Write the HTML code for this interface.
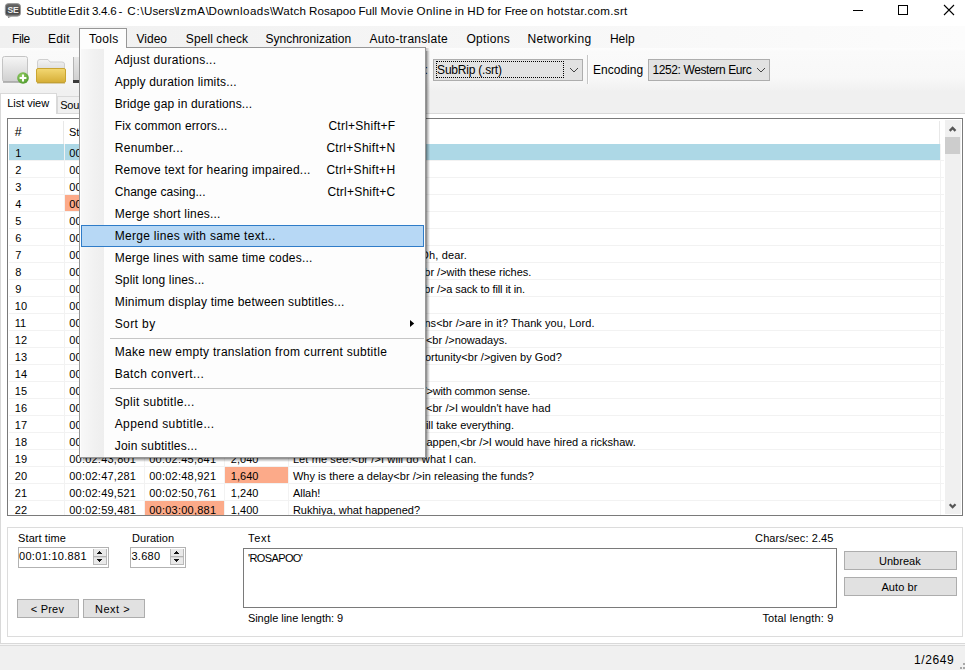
<!DOCTYPE html>
<html><head><meta charset="utf-8"><title>Subtitle Edit</title>
<style>
*{box-sizing:border-box;margin:0;padding:0}
html,body{width:965px;height:670px;overflow:hidden}
body{position:relative;background:#f0f0f0;font-family:"Liberation Sans",sans-serif;font-size:11px;color:#000;}
.a{position:absolute;white-space:nowrap}
.t{position:absolute;white-space:pre;line-height:14px;height:14px;font-size:11px}
.t12{position:absolute;white-space:pre;line-height:14px;height:14px;font-size:12px}
#title{left:0;top:0;width:965px;height:26px;background:#fff}
#menubar{left:0;top:26px;width:965px;height:22px;background:linear-gradient(to right,#f0f0f0,#fcfcfc)}
#toolbar{left:0;top:48px;width:965px;height:44px;background:linear-gradient(#fdfdfd 0%,#fafafa 8%,#f8f8f8 66%,#f0f0f0 100%)}
.btn{position:absolute;background:#e1e1e1;border:1px solid #adadad}
</style></head>
<body>
<div id="title" class="a"></div>
<svg class="a" style="left:4px;top:2px" width="18" height="17" viewBox="0 0 18 17">
<defs><linearGradient id="gi" x1="0" y1="0" x2="0" y2="1"><stop offset="0" stop-color="#6a6a6a"/><stop offset="0.75" stop-color="#444"/><stop offset="1" stop-color="#7a7a7a"/></linearGradient></defs>
<path d="M4 14.5 L4 16 L8 14.5 Z" fill="#777"/>
<rect x="1.3" y="1.6" width="15.2" height="12.6" rx="3.2" fill="url(#gi)" stroke="#9a9a9a" stroke-width="0.9"/>
<text x="8.9" y="11.1" font-family="Liberation Sans" font-size="8.6" font-weight="bold" fill="#ececec" text-anchor="middle" letter-spacing="-0.3">SE</text>
</svg>
<div class="t" style="left:26.2px;top:4px;font-size:11.6px;letter-spacing:0.229px;">Subtitle</div>
<div class="t" style="left:68.0px;top:4px;font-size:11.6px;letter-spacing:0.379px;">Edit</div>
<div class="t" style="left:91.9px;top:4px;font-size:11.6px;letter-spacing:-0.259px;">3.4.6</div>
<div class="t" style="left:118.6px;top:4px;font-size:11.6px;letter-spacing:1.625px;">-</div>
<div class="t" style="left:127.3px;top:4px;font-size:11.6px;letter-spacing:0.857px;">C:\</div>
<div class="t" style="left:144.0px;top:4px;font-size:11.6px;letter-spacing:0.050px;">Users\</div>
<div class="t" style="left:176.5px;top:4px;font-size:11.6px;letter-spacing:0.712px;">IzmA\</div>
<div class="t" style="left:208.4px;top:4px;font-size:11.6px;letter-spacing:0.471px;">Downloads\</div>
<div class="t" style="left:272.6px;top:4px;font-size:11.6px;letter-spacing:0.233px;">Watch</div>
<div class="t" style="left:309.1px;top:4px;font-size:11.6px;letter-spacing:0.025px;">Rosapoo</div>
<div class="t" style="left:358.4px;top:4px;font-size:11.6px;letter-spacing:0.028px;">Full</div>
<div class="t" style="left:380.4px;top:4px;font-size:11.6px;letter-spacing:0.513px;">Movie</div>
<div class="t" style="left:416.6px;top:4px;font-size:11.6px;letter-spacing:0.364px;">Online</div>
<div class="t" style="left:454.8px;top:4px;font-size:11.6px;letter-spacing:0.134px;">in</div>
<div class="t" style="left:467.2px;top:4px;font-size:11.6px;letter-spacing:0.525px;">HD</div>
<div class="t" style="left:487.4px;top:4px;font-size:11.6px;letter-spacing:0.090px;">for</div>
<div class="t" style="left:504.7px;top:4px;font-size:11.6px;letter-spacing:-0.311px;">Free</div>
<div class="t" style="left:529.9px;top:4px;font-size:11.6px;letter-spacing:0.647px;">on</div>
<div class="t" style="left:547.1px;top:4px;font-size:11.6px;letter-spacing:0.298px;">hotstar.com.srt</div>
<div class="a" style="left:853px;top:10px;width:10px;height:1px;background:#000"></div>
<div class="a" style="left:898px;top:5px;width:10px;height:10px;border:1px solid #000"></div>
<svg class="a" style="left:943px;top:4px" width="12" height="12" viewBox="0 0 12 12"><path d="M1 1 L11 11 M11 1 L1 11" stroke="#000" stroke-width="1.1" fill="none"/></svg>
<div id="menubar" class="a"></div>
<div class="t12" style="left:12.1px;top:32px;letter-spacing:-0.386px;">File</div>
<div class="t12" style="left:47.9px;top:32px;letter-spacing:0.378px;">Edit</div>
<div class="t12" style="left:136.4px;top:32px;letter-spacing:0.043px;">Video</div>
<div class="t12" style="left:185.8px;top:32px;letter-spacing:0.084px;">Spell check</div>
<div class="t12" style="left:265.4px;top:32px;letter-spacing:0.021px;">Synchronization</div>
<div class="t12" style="left:369.4px;top:32px;letter-spacing:0.284px;">Auto-translate</div>
<div class="t12" style="left:466.4px;top:32px;letter-spacing:0.334px;">Options</div>
<div class="t12" style="left:527.4px;top:32px;letter-spacing:0.417px;">Networking</div>
<div class="t12" style="left:609.9px;top:32px;">Help</div>
<div id="toolbar" class="a"></div>
<svg class="a" style="left:1px;top:55px" width="30" height="30" viewBox="0 0 30 30">
<defs><linearGradient id="g1" x1="0" y1="0" x2="0" y2="1"><stop offset="0" stop-color="#f6f6f6"/><stop offset="1" stop-color="#d0d0d0"/></linearGradient>
<radialGradient id="g2" cx="0.4" cy="0.35" r="0.7"><stop offset="0" stop-color="#9ad06a"/><stop offset="1" stop-color="#4e9a2c"/></radialGradient></defs>
<rect x="1.5" y="1.5" width="25" height="25" rx="2" fill="url(#g1)" stroke="#c4c4c4"/>
<rect x="2" y="26.2" width="24" height="1.6" fill="#a8a8a8"/>
<circle cx="22" cy="23" r="5.8" fill="url(#g2)"/>
<path d="M22 19.6 V26.4 M18.6 23 H25.4" stroke="#fff" stroke-width="2"/>
</svg>
<svg class="a" style="left:35px;top:56px" width="33" height="29" viewBox="0 0 33 29">
<defs><linearGradient id="g3" x1="0" y1="0" x2="0" y2="1"><stop offset="0" stop-color="#f3d873"/><stop offset="1" stop-color="#d6ae36"/></linearGradient>
<linearGradient id="g4" x1="0" y1="0" x2="0" y2="1"><stop offset="0" stop-color="#f4f4f4"/><stop offset="1" stop-color="#dcdcdc"/></linearGradient></defs>
<path d="M2.5 6 Q2.5 3.5 5 3.5 H13 L15 6 H27 Q29.5 6 29.5 8 V14 H2.5 Z" fill="url(#g4)" stroke="#cfcfcf"/>
<rect x="1.5" y="12.5" width="29" height="14" rx="1.5" fill="url(#g3)" stroke="#caa531"/>
<rect x="2" y="26.5" width="28" height="1.2" fill="#b79a3a" opacity="0.6"/>
</svg>
<div class="a" style="left:73px;top:57px;width:7px;height:24px;background:linear-gradient(#e8e8e8,#cfcfcf);border-left:1px solid #b4b4b4"></div>
<div class="a" style="left:73px;top:80px;width:7px;height:3px;background:#3a3a3a"></div>
<div class="t12" style="left:424.5px;top:63px">:</div>
<div class="a" style="left:433px;top:59px;width:150px;height:22px;background:#e2e2e2;border:1px solid #adadad"></div>
<div class="a" style="left:436px;top:61px;width:128px;height:17px;border:1px dotted #000"></div>
<div class="t12" style="left:437.1px;top:63px;letter-spacing:-0.212px;">SubRip (.srt)</div>
<svg class="a" style="left:569px;top:67px" width="10" height="7" viewBox="0 0 10 7"><path d="M1 1 L5 5 L9 1" stroke="#444" stroke-width="1" fill="none"/></svg>
<div class="a" style="left:587px;top:55px;width:1px;height:29px;background:#c5c5c5"></div>
<div class="a" style="left:588px;top:55px;width:1px;height:29px;background:#fdfdfd"></div>
<div class="t12" style="left:593.1px;top:63px;letter-spacing:-0.006px;">Encoding</div>
<div class="a" style="left:648px;top:59px;width:122px;height:22px;background:#e2e2e2;border:1px solid #adadad"></div>
<div class="t12" style="left:652.4px;top:63px;letter-spacing:-0.386px;">1252: Western Eurc</div>
<svg class="a" style="left:756px;top:67px" width="10" height="7" viewBox="0 0 10 7"><path d="M1 1 L5 5 L9 1" stroke="#444" stroke-width="1" fill="none"/></svg>
<div class="a" style="left:0;top:113px;width:965px;height:531px;background:#fff;border:1px solid #d9d9d9;border-right:none"></div>
<div class="a" style="left:57px;top:96px;width:40px;height:17px;background:#f0f0f0;border:1px solid #d9d9d9;border-bottom:none"></div>
<div class="t" style="left:60.2px;top:98px;letter-spacing:-0.226px;">Sou</div>
<div class="a" style="left:0px;top:93px;width:57px;height:21px;background:#fff;border:1px solid #d9d9d9;border-bottom:none"></div>
<div class="t" style="left:7.2px;top:96px;letter-spacing:-0.032px;">List view</div>
<div class="a" style="left:7px;top:118px;width:956px;height:398px;background:#fff;border:1px solid #7a7a7a"></div>
<div class="a" style="left:8px;top:119px;width:937px;height:396px;overflow:hidden">
<div class="t" style="left:6.7px;top:5.5px;font-size:12.5px;">#</div>
<div class="t" style="left:61.0px;top:6px;">Start time</div>
<div class="a" style="left:55px;top:2px;width:1px;height:23px;background:#e8e8e8"></div>
<div class="a" style="left:56px;top:25px;width:1px;height:371px;background:#f2f2f2"></div>
<div class="a" style="left:135px;top:2px;width:1px;height:23px;background:#e8e8e8"></div>
<div class="a" style="left:136px;top:25px;width:1px;height:371px;background:#f2f2f2"></div>
<div class="a" style="left:215px;top:2px;width:1px;height:23px;background:#e8e8e8"></div>
<div class="a" style="left:216px;top:25px;width:1px;height:371px;background:#f2f2f2"></div>
<div class="a" style="left:279px;top:2px;width:1px;height:23px;background:#e8e8e8"></div>
<div class="a" style="left:280px;top:25px;width:1px;height:371px;background:#f2f2f2"></div>
<div class="a" style="left:931px;top:2px;width:1px;height:23px;background:#e8e8e8"></div>
<div class="a" style="left:932px;top:25px;width:1px;height:371px;background:#f2f2f2"></div>
<div class="a" style="left:1px;top:25px;width:55px;height:16px;background:#add8e6"></div>
<div class="a" style="left:57px;top:25px;width:875px;height:16px;background:#add8e6"></div>
<div class="a" style="left:1px;top:41px;width:935px;height:1px;background:#f2f2f2"></div>
<div class="t" style="left:7.3px;top:27px;">1</div>
<div class="t" style="left:61.2px;top:27px;letter-spacing:0.230px;">00:01:10,881</div>
<div class="t" style="left:141.2px;top:27px;letter-spacing:0.239px;">00:01:14,561</div>
<div class="t" style="left:222.8px;top:27px;letter-spacing:0.034px;">3,680</div>
<div class="t" style="left:284.9px;top:27px;">'ROSAPOO'</div>
<div class="a" style="left:1px;top:58px;width:935px;height:1px;background:#f2f2f2"></div>
<div class="t" style="left:7.3px;top:44px;">2</div>
<div class="t" style="left:61.2px;top:44px;letter-spacing:0.230px;">00:01:27,361</div>
<div class="t" style="left:141.2px;top:44px;letter-spacing:0.239px;">00:01:29,041</div>
<div class="t" style="left:222.8px;top:44px;letter-spacing:0.034px;">1,680</div>
<div class="a" style="left:1px;top:75px;width:935px;height:1px;background:#f2f2f2"></div>
<div class="t" style="left:7.3px;top:61px;">3</div>
<div class="t" style="left:61.2px;top:61px;letter-spacing:0.230px;">00:01:29,761</div>
<div class="t" style="left:141.2px;top:61px;letter-spacing:0.239px;">00:01:31,121</div>
<div class="t" style="left:222.8px;top:61px;letter-spacing:0.034px;">1,360</div>
<div class="a" style="left:57px;top:76px;width:79px;height:16px;background:#fcaa89"></div>
<div class="a" style="left:1px;top:92px;width:935px;height:1px;background:#f2f2f2"></div>
<div class="t" style="left:7.3px;top:78px;">4</div>
<div class="t" style="left:61.2px;top:78px;letter-spacing:0.230px;">00:01:31,161</div>
<div class="t" style="left:141.2px;top:78px;letter-spacing:0.239px;">00:01:33,761</div>
<div class="t" style="left:222.8px;top:78px;letter-spacing:0.034px;">2,600</div>
<div class="a" style="left:1px;top:109px;width:935px;height:1px;background:#f2f2f2"></div>
<div class="t" style="left:7.3px;top:95px;">5</div>
<div class="t" style="left:61.2px;top:95px;letter-spacing:0.230px;">00:01:36,281</div>
<div class="t" style="left:141.2px;top:95px;letter-spacing:0.239px;">00:01:38,121</div>
<div class="t" style="left:222.8px;top:95px;letter-spacing:0.034px;">1,840</div>
<div class="a" style="left:1px;top:126px;width:935px;height:1px;background:#f2f2f2"></div>
<div class="t" style="left:7.3px;top:112px;">6</div>
<div class="t" style="left:61.2px;top:112px;letter-spacing:0.230px;">00:01:41,601</div>
<div class="t" style="left:141.2px;top:112px;letter-spacing:0.239px;">00:01:44,281</div>
<div class="t" style="left:222.8px;top:112px;letter-spacing:0.034px;">2,680</div>
<div class="a" style="left:1px;top:143px;width:935px;height:1px;background:#f2f2f2"></div>
<div class="t" style="left:7.3px;top:129px;">7</div>
<div class="t" style="left:61.2px;top:129px;letter-spacing:0.230px;">00:01:46,521</div>
<div class="t" style="left:141.2px;top:129px;letter-spacing:0.239px;">00:01:48,441</div>
<div class="t" style="left:222.8px;top:129px;letter-spacing:0.034px;">1,920</div>
<div class="t" style="left:420.9px;top:129px;letter-spacing:0.187px;">h, dear.</div>
<div class="t" style="right:516.1px;top:129px">Where did it go?&lt;br /&gt;O</div>
<div class="a" style="left:1px;top:160px;width:935px;height:1px;background:#f2f2f2"></div>
<div class="t" style="left:7.3px;top:146px;">8</div>
<div class="t" style="left:61.2px;top:146px;letter-spacing:0.230px;">00:01:50,201</div>
<div class="t" style="left:141.2px;top:146px;letter-spacing:0.239px;">00:01:53,601</div>
<div class="t" style="left:222.8px;top:146px;letter-spacing:0.034px;">3,400</div>
<div class="t" style="left:422.4px;top:146px;letter-spacing:-0.013px;">r /&gt;with these riches.</div>
<div class="t" style="right:514.6px;top:146px">What will I do&lt;b</div>
<div class="a" style="left:1px;top:177px;width:935px;height:1px;background:#f2f2f2"></div>
<div class="t" style="left:7.3px;top:163px;">9</div>
<div class="t" style="left:61.2px;top:163px;letter-spacing:0.230px;">00:01:54,081</div>
<div class="t" style="left:141.2px;top:163px;letter-spacing:0.239px;">00:01:57,121</div>
<div class="t" style="left:222.8px;top:163px;letter-spacing:0.034px;">3,040</div>
<div class="t" style="left:422.4px;top:163px;letter-spacing:-0.088px;">r /&gt;a sack to fill it in.</div>
<div class="t" style="right:514.6px;top:163px">I will need&lt;b</div>
<div class="a" style="left:1px;top:194px;width:935px;height:1px;background:#f2f2f2"></div>
<div class="t" style="left:6.8px;top:180px;">10</div>
<div class="t" style="left:61.2px;top:180px;letter-spacing:0.230px;">00:02:01,041</div>
<div class="t" style="left:141.2px;top:180px;letter-spacing:0.239px;">00:02:02,921</div>
<div class="t" style="left:222.8px;top:180px;letter-spacing:0.034px;">1,880</div>
<div class="a" style="left:1px;top:211px;width:935px;height:1px;background:#f2f2f2"></div>
<div class="t" style="left:6.8px;top:197px;">11</div>
<div class="t" style="left:61.2px;top:197px;letter-spacing:0.230px;">00:02:04,361</div>
<div class="t" style="left:141.2px;top:197px;letter-spacing:0.239px;">00:02:08,201</div>
<div class="t" style="left:222.8px;top:197px;letter-spacing:0.034px;">3,840</div>
<div class="t" style="left:416.4px;top:197px;letter-spacing:0.064px;">ns&lt;br /&gt;are in it? Thank you, Lord.</div>
<div class="t" style="right:520.6px;top:197px">How many millio</div>
<div class="a" style="left:1px;top:228px;width:935px;height:1px;background:#f2f2f2"></div>
<div class="t" style="left:6.8px;top:214px;">12</div>
<div class="t" style="left:61.2px;top:214px;letter-spacing:0.230px;">00:02:10,481</div>
<div class="t" style="left:141.2px;top:214px;letter-spacing:0.239px;">00:02:13,281</div>
<div class="t" style="left:222.8px;top:214px;letter-spacing:0.034px;">2,800</div>
<div class="t" style="left:417.9px;top:214px;">&lt;br /&gt;nowadays.</div>
<div class="t" style="right:519.1px;top:214px">It is very hard</div>
<div class="a" style="left:1px;top:245px;width:935px;height:1px;background:#f2f2f2"></div>
<div class="t" style="left:6.8px;top:231px;">13</div>
<div class="t" style="left:61.2px;top:231px;letter-spacing:0.230px;">00:02:14,001</div>
<div class="t" style="left:141.2px;top:231px;letter-spacing:0.239px;">00:02:17,561</div>
<div class="t" style="left:222.8px;top:231px;letter-spacing:0.034px;">3,560</div>
<div class="t" style="left:416.9px;top:231px;letter-spacing:0.046px;">ortunity&lt;br /&gt;given by God?</div>
<div class="t" style="right:520.1px;top:231px">Isn't this an opp</div>
<div class="a" style="left:1px;top:262px;width:935px;height:1px;background:#f2f2f2"></div>
<div class="t" style="left:6.8px;top:248px;">14</div>
<div class="t" style="left:61.2px;top:248px;letter-spacing:0.230px;">00:02:20,641</div>
<div class="t" style="left:141.2px;top:248px;letter-spacing:0.239px;">00:02:22,401</div>
<div class="t" style="left:222.8px;top:248px;letter-spacing:0.034px;">1,760</div>
<div class="a" style="left:1px;top:279px;width:935px;height:1px;background:#f2f2f2"></div>
<div class="t" style="left:6.8px;top:265px;">15</div>
<div class="t" style="left:61.2px;top:265px;letter-spacing:0.230px;">00:02:23,921</div>
<div class="t" style="left:141.2px;top:265px;letter-spacing:0.239px;">00:02:27,081</div>
<div class="t" style="left:222.8px;top:265px;letter-spacing:0.034px;">3,160</div>
<div class="t" style="left:418.4px;top:265px;letter-spacing:-0.157px;">&gt;with common sense.</div>
<div class="t" style="right:518.6px;top:265px">Use it wisely&lt;br /</div>
<div class="a" style="left:1px;top:296px;width:935px;height:1px;background:#f2f2f2"></div>
<div class="t" style="left:6.8px;top:282px;">16</div>
<div class="t" style="left:61.2px;top:282px;letter-spacing:0.230px;">00:02:28,361</div>
<div class="t" style="left:141.2px;top:282px;letter-spacing:0.239px;">00:02:31,241</div>
<div class="t" style="left:222.8px;top:282px;letter-spacing:0.034px;">2,880</div>
<div class="t" style="left:417.9px;top:282px;letter-spacing:0.061px;">&lt;br /&gt;I wouldn't have had</div>
<div class="t" style="right:519.1px;top:282px">If I had known</div>
<div class="a" style="left:1px;top:313px;width:935px;height:1px;background:#f2f2f2"></div>
<div class="t" style="left:6.8px;top:299px;">17</div>
<div class="t" style="left:61.2px;top:299px;letter-spacing:0.230px;">00:02:32,001</div>
<div class="t" style="left:141.2px;top:299px;letter-spacing:0.239px;">00:02:34,481</div>
<div class="t" style="left:222.8px;top:299px;letter-spacing:0.034px;">2,480</div>
<div class="t" style="left:417.9px;top:299px;">ill take everything.</div>
<div class="t" style="right:519.1px;top:299px">The others w</div>
<div class="a" style="left:1px;top:330px;width:935px;height:1px;background:#f2f2f2"></div>
<div class="t" style="left:6.8px;top:316px;">18</div>
<div class="t" style="left:61.2px;top:316px;letter-spacing:0.230px;">00:02:36,281</div>
<div class="t" style="left:141.2px;top:316px;letter-spacing:0.239px;">00:02:40,361</div>
<div class="t" style="left:222.8px;top:316px;letter-spacing:0.034px;">4,080</div>
<div class="t" style="left:418.4px;top:316px;letter-spacing:0.006px;">appen,&lt;br /&gt;I would have hired a rickshaw.</div>
<div class="t" style="right:518.6px;top:316px">If I knew it would h</div>
<div class="a" style="left:1px;top:347px;width:935px;height:1px;background:#f2f2f2"></div>
<div class="t" style="left:6.8px;top:333px;">19</div>
<div class="t" style="left:61.2px;top:333px;letter-spacing:0.230px;">00:02:43,801</div>
<div class="t" style="left:141.2px;top:333px;letter-spacing:0.239px;">00:02:45,841</div>
<div class="t" style="left:222.8px;top:333px;letter-spacing:0.034px;">2,040</div>
<div class="t" style="left:284.9px;top:333px;letter-spacing:0.112px;">Let me see.&lt;br /&gt;I will do what I can.</div>
<div class="a" style="left:217px;top:348px;width:63px;height:16px;background:#fcaa89"></div>
<div class="a" style="left:1px;top:364px;width:935px;height:1px;background:#f2f2f2"></div>
<div class="t" style="left:6.8px;top:350px;">20</div>
<div class="t" style="left:61.2px;top:350px;letter-spacing:0.230px;">00:02:47,281</div>
<div class="t" style="left:141.2px;top:350px;letter-spacing:0.239px;">00:02:48,921</div>
<div class="t" style="left:222.8px;top:350px;letter-spacing:0.034px;">1,640</div>
<div class="t" style="left:284.9px;top:350px;letter-spacing:0.037px;">Why is there a delay&lt;br /&gt;in releasing the funds?</div>
<div class="a" style="left:1px;top:381px;width:935px;height:1px;background:#f2f2f2"></div>
<div class="t" style="left:6.8px;top:367px;">21</div>
<div class="t" style="left:61.2px;top:367px;letter-spacing:0.230px;">00:02:49,521</div>
<div class="t" style="left:141.2px;top:367px;letter-spacing:0.239px;">00:02:50,761</div>
<div class="t" style="left:222.8px;top:367px;letter-spacing:0.034px;">1,240</div>
<div class="t" style="left:284.9px;top:367px;">Allah!</div>
<div class="a" style="left:137px;top:382px;width:79px;height:16px;background:#fcaa89"></div>
<div class="a" style="left:1px;top:398px;width:935px;height:1px;background:#f2f2f2"></div>
<div class="t" style="left:6.8px;top:384px;">22</div>
<div class="t" style="left:61.2px;top:384px;letter-spacing:0.230px;">00:02:59,481</div>
<div class="t" style="left:141.2px;top:384px;letter-spacing:0.239px;">00:03:00,881</div>
<div class="t" style="left:222.8px;top:384px;letter-spacing:0.034px;">1,400</div>
<div class="t" style="left:284.9px;top:384px;">Rukhiya, what happened?</div>
</div>
<div class="a" style="left:945px;top:120px;width:16px;height:394px;background:#f0f0f0"></div>
<div class="a" style="left:945px;top:137px;width:15px;height:17px;background:#cdcdcd"></div>
<svg class="a" style="left:945px;top:122px" width="16" height="14" viewBox="0 0 16 14"><path d="M4.7 8.9 L7.6 6 L10.5 8.9" stroke="#555" stroke-width="2.3" fill="none"/></svg>
<svg class="a" style="left:945px;top:499px" width="16" height="14" viewBox="0 0 16 14"><path d="M4.7 5.3 L7.6 8.2 L10.5 5.3" stroke="#555" stroke-width="2.3" fill="none"/></svg>
<div class="a" style="left:7px;top:527px;width:956px;height:110px;border:1px solid #dcdcdc"></div>
<div class="t" style="left:18.1px;top:531px;letter-spacing:0.072px;">Start time</div>
<div class="t" style="left:132.0px;top:531px;letter-spacing:0.065px;">Duration</div>
<div class="t" style="left:247.9px;top:531px;letter-spacing:0.753px;">Text</div>
<div class="t" style="left:755.1px;top:531px;letter-spacing:0.090px;">Chars/sec: 2.45</div>
<div class="a" style="left:18px;top:547px;width:91px;height:21px;background:#fff;border:1px solid #b2b2b2"></div>
<div class="t" style="left:19.0px;top:549px;letter-spacing:0.305px;">00:01:10.881</div>
<div class="a" style="left:130px;top:547px;width:56px;height:21px;background:#fff;border:1px solid #b2b2b2"></div>
<div class="t" style="left:131.4px;top:549px;letter-spacing:0.294px;">3.680</div>
<div class="a" style="left:93px;top:549px;width:14px;height:16px;background:#e9e9e9;border:1px solid #b9b9b9;border-top:none"></div>
<div class="a" style="left:93px;top:556px;width:14px;height:1px;background:#b4b4b4"></div>
<div class="a" style="left:94px;top:557px;width:12px;height:1px;background:#d8d8d8"></div>
<div class="a" style="left:99px;top:551px;width:1px;height:1px;background:#111"></div>
<div class="a" style="left:98px;top:552px;width:3px;height:1px;background:#111"></div>
<div class="a" style="left:97px;top:553px;width:5px;height:1px;background:#111"></div>
<div class="a" style="left:99px;top:561px;width:1px;height:1px;background:#111"></div>
<div class="a" style="left:98px;top:560px;width:3px;height:1px;background:#111"></div>
<div class="a" style="left:97px;top:559px;width:5px;height:1px;background:#111"></div>
<div class="a" style="left:170px;top:549px;width:14px;height:16px;background:#e9e9e9;border:1px solid #b9b9b9;border-top:none"></div>
<div class="a" style="left:170px;top:556px;width:14px;height:1px;background:#b4b4b4"></div>
<div class="a" style="left:171px;top:557px;width:12px;height:1px;background:#d8d8d8"></div>
<div class="a" style="left:176px;top:551px;width:1px;height:1px;background:#111"></div>
<div class="a" style="left:175px;top:552px;width:3px;height:1px;background:#111"></div>
<div class="a" style="left:174px;top:553px;width:5px;height:1px;background:#111"></div>
<div class="a" style="left:176px;top:561px;width:1px;height:1px;background:#111"></div>
<div class="a" style="left:175px;top:560px;width:3px;height:1px;background:#111"></div>
<div class="a" style="left:174px;top:559px;width:5px;height:1px;background:#111"></div>
<div class="a" style="left:243px;top:548px;width:594px;height:60px;background:#fff;border:1px solid #7a7a7a"></div>
<div class="t" style="left:247.9px;top:551px;letter-spacing:-0.603px;">'ROSAPOO'</div>
<div class="t" style="left:247.9px;top:611px;letter-spacing:-0.039px;">Single line length: 9</div>
<div class="t" style="left:762.4px;top:611px;letter-spacing:0.173px;">Total length: 9</div>
<div class="btn" style="left:17px;top:599px;width:62px;height:19px"></div>
<div class="btn" style="left:83px;top:599px;width:62px;height:19px"></div>
<div class="btn" style="left:844px;top:551px;width:113px;height:19px"></div>
<div class="btn" style="left:844px;top:577px;width:113px;height:19px"></div>
<div class="t" style="left:30.7px;top:602px;letter-spacing:0.232px;">&lt; Prev</div>
<div class="t" style="left:95.0px;top:602px;letter-spacing:0.498px;">Next &gt;</div>
<div class="t" style="left:878.9px;top:554px;letter-spacing:0.046px;">Unbreak</div>
<div class="t" style="left:881.4px;top:580px;letter-spacing:0.104px;">Auto br</div>
<div class="a" style="left:0;top:644px;width:965px;height:1px;background:#f6f6f6"></div>
<div class="a" style="left:0;top:645px;width:965px;height:1px;background:#dadada"></div>
<div class="a" style="left:0;top:646px;width:965px;height:24px;background:#f0f0f0"></div>
<div class="t12" style="left:913.9px;top:653px;letter-spacing:0.633px;">1/2649</div>
<div class="a" style="left:963px;top:663px;width:2px;height:2px;background:#a8a8a8"></div>
<div class="a" style="left:960px;top:667px;width:2px;height:2px;background:#a8a8a8"></div>
<div class="a" style="left:963px;top:667px;width:2px;height:2px;background:#a8a8a8"></div>
<div class="a" style="left:426px;top:51px;width:4px;height:407px;background:linear-gradient(to right,rgba(0,0,0,0.5),rgba(0,0,0,0.25) 40%,rgba(0,0,0,0))"></div>
<div class="a" style="left:83px;top:458px;width:343px;height:4px;background:linear-gradient(to bottom,rgba(0,0,0,0.5),rgba(0,0,0,0.25) 40%,rgba(0,0,0,0))"></div>
<div class="a" style="left:426px;top:458px;width:4px;height:4px;background:radial-gradient(circle at 0 0,rgba(0,0,0,0.5),rgba(0,0,0,0.22) 40%,rgba(0,0,0,0) 100%)"></div>
<div class="a" style="left:426px;top:48px;width:4px;height:3px;background:linear-gradient(to right,rgba(0,0,0,0.25),rgba(0,0,0,0))"></div>
<div class="a" style="left:80px;top:458px;width:3px;height:4px;background:linear-gradient(to bottom,rgba(0,0,0,0.25),rgba(0,0,0,0))"></div>
<div class="a" style="left:79px;top:47px;width:347px;height:411px;background:#fdfdfd;border:1px solid #979797"></div>
<div class="a" style="left:81px;top:49px;width:23px;height:408px;background:linear-gradient(to right,#f8f8f8,#f1f1f1 60%,#eeeeee)"></div>
<div class="a" style="left:79px;top:28px;width:48px;height:20px;background:#fdfdfd;border:1px solid #979797;border-bottom:none"></div>
<div class="a" style="left:80px;top:47px;width:46px;height:1px;background:#fdfdfd"></div>
<div class="t12" style="left:88.9px;top:32px;letter-spacing:0.357px;">Tools</div>
<div class="t12" style="left:114.7px;top:53px;letter-spacing:0.297px;">Adjust durations...</div>
<div class="t12" style="left:114.7px;top:75px;letter-spacing:0.196px;">Apply duration limits...</div>
<div class="t12" style="left:114.7px;top:97px;letter-spacing:0.161px;">Bridge gap in durations...</div>
<div class="t12" style="left:114.7px;top:119px;letter-spacing:0.139px;">Fix common errors...</div>
<div class="t12" style="left:328.4px;top:119px;letter-spacing:0.247px;">Ctrl+Shift+F</div>
<div class="t12" style="left:114.7px;top:141px;letter-spacing:0.311px;">Renumber...</div>
<div class="t12" style="left:326.4px;top:141px;letter-spacing:0.303px;">Ctrl+Shift+N</div>
<div class="t12" style="left:114.7px;top:163px;letter-spacing:0.242px;">Remove text for hearing impaired...</div>
<div class="t12" style="left:326.4px;top:163px;letter-spacing:0.303px;">Ctrl+Shift+H</div>
<div class="t12" style="left:114.7px;top:185px;letter-spacing:0.052px;">Change casing...</div>
<div class="t12" style="left:327.4px;top:185px;letter-spacing:0.220px;">Ctrl+Shift+C</div>
<div class="t12" style="left:114.7px;top:207px;letter-spacing:0.193px;">Merge short lines...</div>
<div class="a" style="left:81px;top:225px;width:343px;height:22px;background:#b7d8f5;border:1px solid #2f7cc8"></div>
<div class="t12" style="left:114.7px;top:229px;letter-spacing:0.305px;">Merge lines with same text...</div>
<div class="t12" style="left:114.7px;top:251px;letter-spacing:0.204px;">Merge lines with same time codes...</div>
<div class="t12" style="left:114.7px;top:273px;letter-spacing:0.132px;">Split long lines...</div>
<div class="t12" style="left:114.7px;top:295px;letter-spacing:0.207px;">Minimum display time between subtitles...</div>
<div class="t12" style="left:114.7px;top:317px;letter-spacing:0.412px;">Sort by</div>
<svg class="a" style="left:410px;top:320px" width="5" height="7" viewBox="0 0 5 7"><path d="M0 0 L4.2 3.5 L0 7 Z" fill="#000"/></svg>
<div class="a" style="left:110px;top:338px;width:314px;height:1px;background:#c6c6c6"></div>
<div class="t12" style="left:114.7px;top:345px;letter-spacing:0.284px;">Make new empty translation from current subtitle</div>
<div class="t12" style="left:114.7px;top:367px;letter-spacing:0.377px;">Batch convert...</div>
<div class="a" style="left:110px;top:388px;width:314px;height:1px;background:#c6c6c6"></div>
<div class="t12" style="left:114.7px;top:395px;letter-spacing:0.306px;">Split subtitle...</div>
<div class="t12" style="left:114.7px;top:417px;letter-spacing:0.398px;">Append subtitle...</div>
<div class="t12" style="left:114.7px;top:439px;letter-spacing:0.207px;">Join subtitles...</div>
</body></html>
